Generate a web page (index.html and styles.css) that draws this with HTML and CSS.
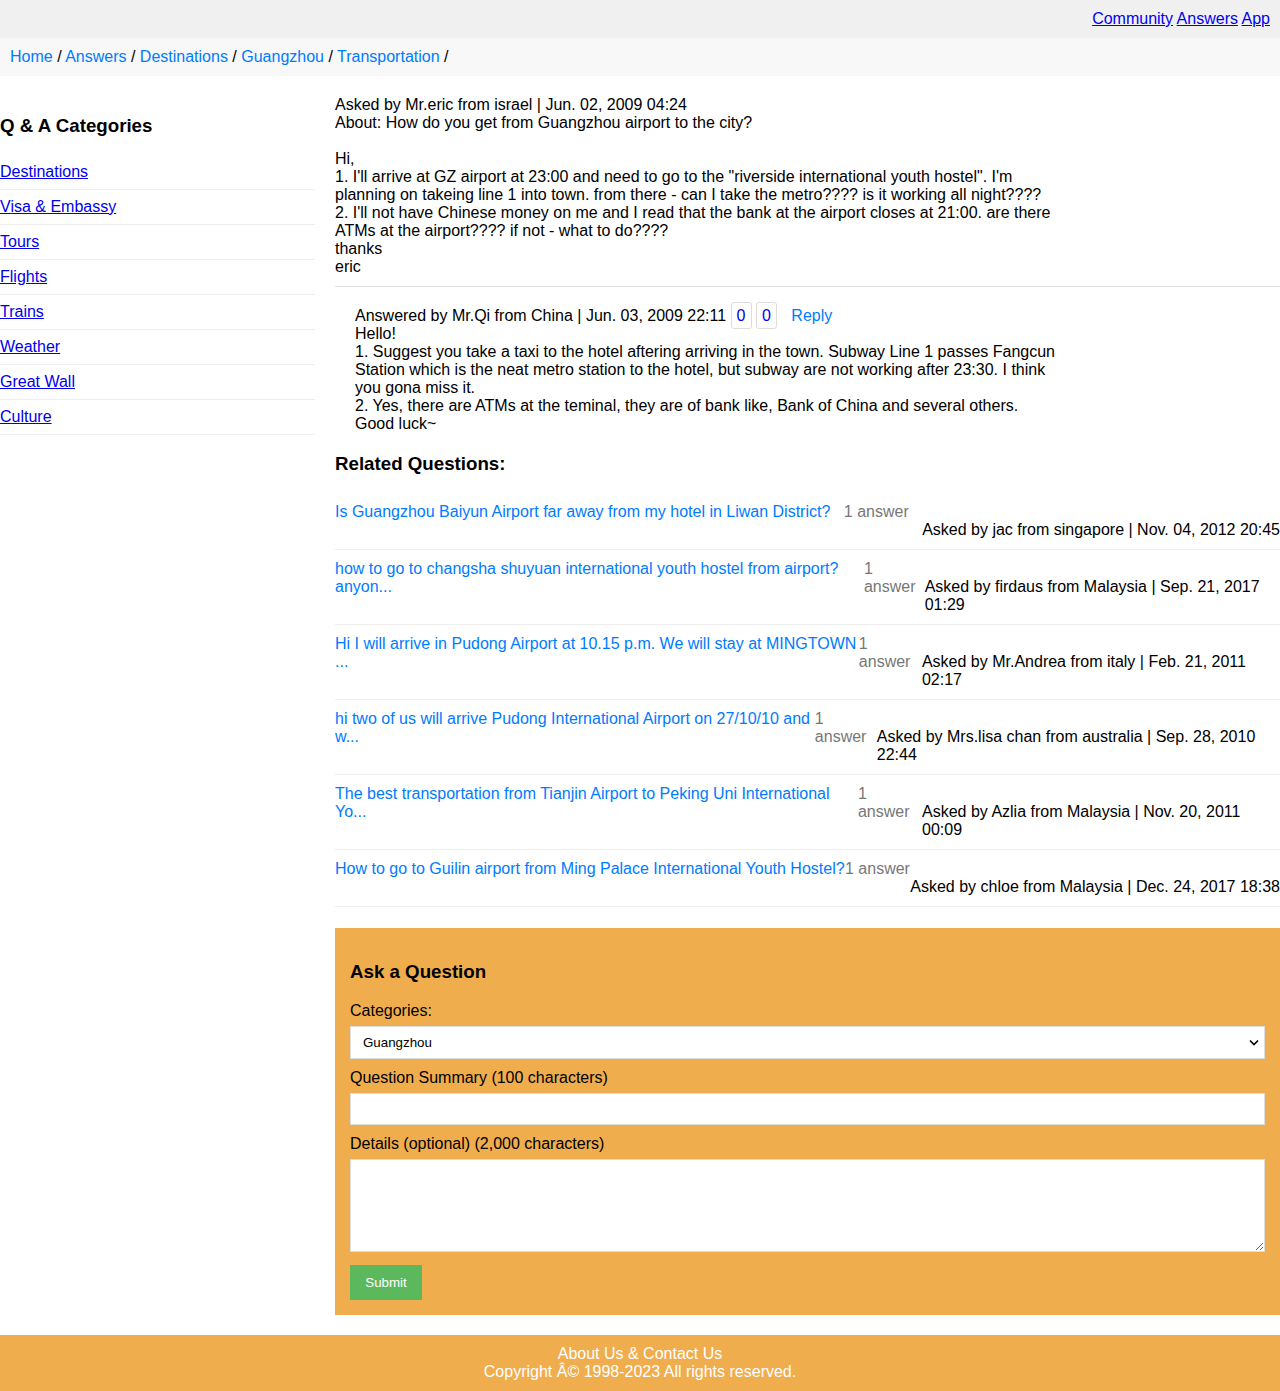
FILE: index.html
```html
<!DOCTYPE html>
<html lang="en">
<head>
<meta charset="utf-8">
<title>How do you get from Guangzhou airport to the city?</title>
<link rel="stylesheet" href="styles.css">
</head>
<body>
<div class="topbar">
  <a href="#">Community</a> <a href="#">Answers</a> <a href="#">App</a>
</div>
<div class="crumbs">
  <a href="#">Home</a> / <a href="#">Answers</a> / <a href="#">Destinations</a> / <a href="#">Guangzhou</a> / <a href="#">Transportation</a> /
</div>
<div class="layout">
  <aside class="sidebar">
    <h3>Q &amp; A Categories</h3>
    <ul class="cat-list">
      <li><a href="#">Destinations</a></li>
      <li><a href="#">Visa &amp; Embassy</a></li>
      <li><a href="#">Tours</a></li>
      <li><a href="#">Flights</a></li>
      <li><a href="#">Trains</a></li>
      <li><a href="#">Weather</a></li>
      <li><a href="#">Great Wall</a></li>
      <li><a href="#">Culture</a></li>
    </ul>
  </aside>
  <main class="main">
    <div class="question">
      <div class="qa-text">
        Asked by Mr.eric from israel | Jun. 02, 2009 04:24<br>
        About: How do you get from Guangzhou airport to the city?<br><br>
        Hi,<br>
        1. I'll arrive at GZ airport at 23:00 and need to go to the "riverside international youth hostel". I'm planning on takeing line 1 into town. from there - can I take the metro???? is it working all night????<br>
        2. I'll not have Chinese money on me and I read that the bank at the airport closes at 21:00. are there ATMs at the airport???? if not - what to do????<br>
        thanks<br>
        eric
      </div>
    </div>
    <div class="answer">
      <div class="qa-text">
        Answered by Mr.Qi from China | Jun. 03, 2009 22:11 <a class="vote" href="#">0</a> <a class="vote" href="#">0</a> <a class="reply" href="#">Reply</a><br>
        Hello!<br>
        1. Suggest you take a taxi to the hotel aftering arriving in the town. Subway Line 1 passes Fangcun Station which is the neat metro station to the hotel, but subway are not working after 23:30. I think you gona miss it.<br>
        2. Yes, there are ATMs at the teminal, they are of bank like, Bank of China and several others.<br>
        Good luck~
      </div>
    </div>

    <h3>Related Questions:</h3>
    <div class="related">
      <div class="rel-item">
        <a class="rel-title" href="#">Is Guangzhou Baiyun Airport far away from my hotel in Liwan District?</a>
        <span class="rel-count">1 answer</span>
        <span class="rel-meta">Asked by jac from singapore | Nov. 04, 2012 20:45</span>
      </div>
      <div class="rel-item">
        <a class="rel-title" href="#">how to go to changsha shuyuan international youth hostel from airport? anyon...</a>
        <span class="rel-count">1 answer</span>
        <span class="rel-meta">Asked by firdaus from Malaysia | Sep. 21, 2017 01:29</span>
      </div>
      <div class="rel-item">
        <a class="rel-title" href="#">Hi I will arrive in Pudong Airport at 10.15 p.m. We will stay at MINGTOWN ...</a>
        <span class="rel-count">1 answer</span>
        <span class="rel-meta">Asked by Mr.Andrea from italy | Feb. 21, 2011 02:17</span>
      </div>
      <div class="rel-item">
        <a class="rel-title" href="#">hi two of us will arrive Pudong International Airport on 27/10/10 and w...</a>
        <span class="rel-count">1 answer</span>
        <span class="rel-meta">Asked by Mrs.lisa chan from australia | Sep. 28, 2010 22:44</span>
      </div>
      <div class="rel-item">
        <a class="rel-title" href="#">The best transportation from Tianjin Airport to Peking Uni International Yo...</a>
        <span class="rel-count">1 answer</span>
        <span class="rel-meta">Asked by Azlia from Malaysia | Nov. 20, 2011 00:09</span>
      </div>
      <div class="rel-item">
        <a class="rel-title" href="#">How to go to Guilin airport from Ming Palace International Youth Hostel?</a>
        <span class="rel-count">1 answer</span>
        <span class="rel-meta">Asked by chloe from Malaysia | Dec. 24, 2017 18:38</span>
      </div>
    </div>

    <form class="ask">
      <h3>Ask a Question</h3>
      <label class="lbl" for="cat">Categories:</label>
      <div class="select-wrap">
        <select id="cat" class="field select">
          <option>Guangzhou</option>
        </select>
        <svg class="chev" width="10" height="7" viewBox="0 0 10 7"><path d="M1 1.5 L5 5.5 L9 1.5" fill="none" stroke="#000" stroke-width="1.6"/></svg>
      </div>
      <label class="lbl" for="sum">Question Summary (100 characters)</label>
      <input id="sum" class="field input" type="text">
      <label class="lbl" for="det">Details (optional) (2,000 characters)</label>
      <textarea id="det" class="field area"></textarea>
      <button type="button" class="submit">Submit</button>
    </form>
  </main>
</div>
<footer class="footer">
  <a href="#">About Us &amp; Contact Us</a><br>
  Copyright Â© 1998-2023 All rights reserved.
</footer>
</body>
</html>
```

FILE: styles.css
```css
body {
  margin: 0;
  font-family: "Liberation Sans", Arial, sans-serif;
  font-size: 16px;
  line-height: 18px;
  color: #000;
  background: #fff;
}

h3 {
  font-size: 18.72px;
  line-height: 21.5px;
  font-weight: bold;
  margin: 18.72px 0;
}

.topbar {
  background: #f0f0f0;
  padding: 10px;
  text-align: right;
}
.topbar a { color: #0000ee; }

.crumbs {
  background: #f8f8f8;
  padding: 10px;
}
.crumbs a {
  color: #007bff;
  text-decoration: none;
}

.layout {
  display: flex;
  gap: 20px;
}

.sidebar {
  flex: none;
  width: 315px;
  padding-top: 20px;
}
.cat-list {
  list-style: none;
  margin: 0;
  padding: 0;
}
.cat-list li {
  padding: 8px 0;
  border-bottom: 1px solid #eee;
}
.cat-list a { color: #0000ee; }

.main {
  flex: 1;
  min-width: 0;
  padding-top: 20px;
}

.qa-text { max-width: 720px; }

.question {
  padding-bottom: 10px;
  border-bottom: 1px solid #ddd;
}

.answer {
  padding: 20px 0 1px 20px;
}

.vote {
  color: #0000ee;
  text-decoration: none;
  padding: 4px 5px;
  border: 1px solid #ddd;
  border-radius: 3px;
}
.reply {
  color: #007bff;
  text-decoration: none;
  margin-left: 10px;
}

.rel-item {
  display: flex;
  justify-content: space-between;
  padding: 10px 0;
  border-bottom: 1px solid #eee;
}
.rel-title {
  color: #007bff;
  text-decoration: none;
}
.rel-count { color: #777; }
.rel-meta { padding-top: 18px; }

.ask {
  margin-top: 21px;
  background: #f0ad4e;
  padding: 15px;
}
.ask h3 { margin: 17.72px 0 19.72px; }

.lbl {
  display: block;
  margin-bottom: 6px;
}

.field {
  display: block;
  width: 100%;
  box-sizing: border-box;
  border: 1px solid #ddd;
  background: #fff;
  font-family: "Liberation Sans", Arial, sans-serif;
  font-size: 13.33px;
  color: #000;
  border-radius: 0;
  margin: 0 0 10px;
}

.select-wrap { position: relative; }
.select {
  appearance: none;
  -webkit-appearance: none;
  height: 33px;
  padding: 0 12px;
}
.chev {
  position: absolute;
  right: 6px;
  top: 13px;
}

.input {
  height: 32px;
  padding: 0 12px;
}

.area {
  height: 93px;
  padding: 6px 12px;
  margin-bottom: 13px;
  resize: both;
}

.submit {
  display: block;
  width: 72px;
  background: #5cb85c;
  color: #fff;
  border: none;
  padding: 10px 0;
  font-family: "Liberation Sans", Arial, sans-serif;
  font-size: 13.33px;
  line-height: 15px;
  text-align: center;
}

.footer {
  margin-top: 20px;
  background: #f0ad4e;
  color: #fff;
  text-align: center;
  padding: 10px;
}
.footer a {
  color: #fff;
  text-decoration: none;
}
```
